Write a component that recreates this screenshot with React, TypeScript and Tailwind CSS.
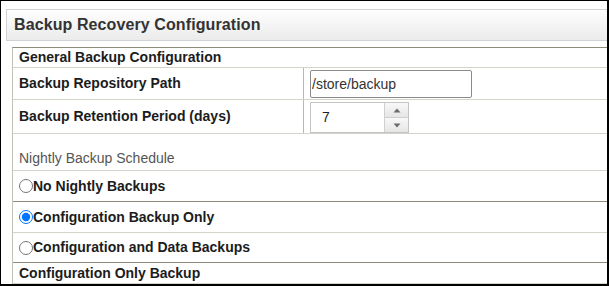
export default function App() {
  const font = { fontFamily: '"Liberation Sans", Arial, sans-serif' };

  return (
    <div
      className="w-[609px] h-[286px] overflow-hidden bg-white border-black border-t border-l border-r-2 border-b-2"
      style={font}
    >
      {/* PAGE HEADER */}
      <div className="ml-[5px] mt-[8px] w-[640px] h-[32px] border border-[#d2d2d2] bg-gradient-to-b from-[#fefefe] to-[#ebebeb] flex items-center pl-[7px]">
        <h1 className="text-[16px] font-bold text-[#333] tracking-[0.1px]">Backup Recovery Configuration</h1>
      </div>

      {/* SETTINGS TABLE */}
      <div className="ml-[11px] mt-[6px] w-[640px] border-t border-l border-t-[#8f8b7a] border-l-[#c4c2b6] text-[14px] text-[#1c1c1c]">
        <div className="h-[20px] border-b border-[#d4d4cc] flex items-center pl-[6px] font-bold">
          General Backup Configuration
        </div>

        <div className="h-[32px] border-b border-[#d4d4cc] flex">
          <div className="w-[291px] border-r border-[#b8b8b0] flex items-center pl-[6px] font-bold">
            Backup Repository Path
          </div>
          <div className="flex items-start pl-[6px] pt-[2px]">
            <input
              readOnly
              value="/store/backup"
              className="w-[162px] h-[28px] border border-[#8a8a8a] rounded-[2px] pl-[1px] text-[14px] text-[#333] outline-none"
            />
          </div>
        </div>

        <div className="h-[34px] border-b border-[#d4d4cc] flex">
          <div className="w-[291px] border-r border-[#b8b8b0] flex items-center pl-[6px] font-bold">
            Backup Retention Period (days)
          </div>
          <div className="flex items-start pl-[6px] pt-[2px]">
            <div className="w-[99px] h-[31px] border border-[#c4c4c4] flex">
              <div className="flex-1 flex items-center pl-[11px] text-[#222]">7</div>
              <div className="w-[24px] flex flex-col border-l border-[#d0d0d0]">
                <div className="flex-1 flex items-center justify-center bg-gradient-to-b from-[#f8f8f8] to-[#e6e6e6] border-b border-[#d0d0d0]">
                  <svg width="8" height="5" viewBox="0 0 8 5">
                    <path d="M4 0.5 L7.5 4.5 L0.5 4.5 Z" fill="#6b6b6b" />
                  </svg>
                </div>
                <div className="flex-1 flex items-center justify-center bg-gradient-to-b from-[#f8f8f8] to-[#e6e6e6]">
                  <svg width="8" height="5" viewBox="0 0 8 5">
                    <path d="M0.5 0.5 L7.5 0.5 L4 4.5 Z" fill="#6b6b6b" />
                  </svg>
                </div>
              </div>
            </div>
          </div>
        </div>

        <div className="h-[37px] border-b border-[#d4d4cc] flex items-end pb-[1px] pl-[6px] text-[#555]">
          Nightly Backup Schedule
        </div>

        <label className="h-[31px] border-b border-[#8f8b7a] flex items-center pl-[6px] font-bold">
          <input type="radio" name="nightly" className="m-0 w-[14px] h-[14px]" />
          No Nightly Backups
        </label>

        <label className="h-[31px] border-b border-[#d4d4cc] flex items-center pl-[6px] font-bold">
          <input type="radio" name="nightly" defaultChecked className="m-0 w-[14px] h-[14px]" />
          Configuration Backup Only
        </label>

        <label className="h-[30px] border-b border-[#8f8b7a] flex items-center pl-[6px] font-bold">
          <input type="radio" name="nightly" className="m-0 w-[14px] h-[14px]" />
          Configuration and Data Backups
        </label>

        <div className="h-[21px] border-b border-[#d4d4cc] flex items-center pl-[6px] font-bold">
          Configuration Only Backup
        </div>

        <div className="h-[20px] flex">
          <div className="w-[291px] border-r border-[#b8b8b0]" />
        </div>
      </div>
    </div>
  );
}
